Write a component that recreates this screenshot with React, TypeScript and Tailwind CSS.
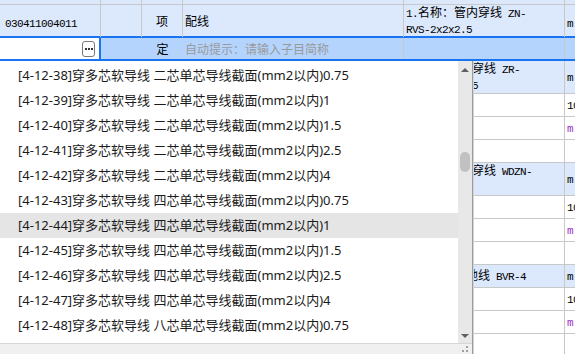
import React from "react";

const G = "grid grid-cols-[101px_41px_41px_221px_161px_1fr]";
const LN = "border-r border-[#c8c8c8]";

function Mixed({ text }: { text: string }) {
  const parts = text.split(/([\u3000-\u303f\u4e00-\u9fff\uff00-\uffef]+)/);
  return (
    <span className="whitespace-pre">
      {parts.map((p, i) =>
        /[\u3000-\u303f\u4e00-\u9fff\uff00-\uffef]/.test(p) ? (
          <span key={i} className="font-['Noto_Sans_CJK_SC',sans-serif] text-[12px]">
            {p}
          </span>
        ) : (
          <span key={i} className="font-['Liberation_Mono',monospace] text-[11px] tracking-[-0.6px]">
            {p}
          </span>
        )
      )}
    </span>
  );
}

type Row =
  | { kind: "blue"; lines: string[]; h: "h-[33px]" | "h-[23px]" }
  | { kind: "white"; v?: string; purple?: boolean };

const rows: Row[] = [
  { kind: "blue", lines: ["1.名称:管内穿线 ZR-", "RVS-2x2x0.75"], h: "h-[33px]" },
  { kind: "white", v: "10" },
  { kind: "white", v: "m", purple: true },
  { kind: "white" },
  { kind: "blue", lines: ["1.名称:管内穿线 WDZN-", "BYJ-3x2.5"], h: "h-[33px]" },
  { kind: "white", v: "10" },
  { kind: "white", v: "m", purple: true },
  { kind: "white" },
  { kind: "blue", lines: ["1.名称：接地线 BVR-4"], h: "h-[23px]" },
  { kind: "white", v: "10" },
  { kind: "white", v: "m", purple: true },
  { kind: "white" },
];

const items: [string, string, string][] = [
  ["38", "二", "0.75"],
  ["39", "二", "1"],
  ["40", "二", "1.5"],
  ["41", "二", "2.5"],
  ["42", "二", "4"],
  ["43", "四", "0.75"],
  ["44", "四", "1"],
  ["45", "四", "1.5"],
  ["46", "四", "2.5"],
  ["47", "四", "4"],
  ["48", "八", "0.75"],
];

function BodyRow({ r }: { r: Row }) {
  if (r.kind === "blue") {
    return (
      <div className={`${G} ${r.h} bg-[#dce8fb] border-b border-[#c8c8c8]`}>
        <div className={LN} />
        <div className={LN} />
        <div className={LN} />
        <div className={LN} />
        <div className={`${LN} flex flex-col justify-center pl-[2px] leading-[13px] text-black`}>
          {r.lines.map((l, i) => (
            <div key={i}>
              <Mixed text={l} />
            </div>
          ))}
        </div>
        <div className="flex items-center pl-[2px] leading-[13px] text-black">
          <Mixed text="m" />
        </div>
      </div>
    );
  }
  return (
    <div className={`${G} h-[23px] bg-white border-b border-[#c8c8c8]`}>
      <div className={LN} />
      <div className={LN} />
      <div className={LN} />
      <div className={LN} />
      <div className={LN} />
      <div
        className={`flex items-center pl-[2px] leading-[13px] overflow-hidden ${
          r.purple ? "text-[#9a2fc4]" : "text-black"
        }`}
      >
        {r.v ? <Mixed text={r.v} /> : null}
      </div>
    </div>
  );
}

export default function App() {
  return (
    <div className="relative w-[575px] h-[354px] overflow-hidden bg-white">
      {/* top partial row */}
      <div className={`${G} h-[5px] bg-[#dce8fb] border-b border-[#c8c8c8]`}>
        <div className={LN} />
        <div className={LN} />
        <div className={LN} />
        <div className={LN} />
        <div className={LN} />
        <div />
      </div>

      {/* row 1 */}
      <div className={`${G} h-[31px] bg-[#dce8fb]`}>
        <div className={`${LN} flex items-center pl-[5px] text-black`}>
          <Mixed text="030411004011" />
        </div>
        <div className={LN} />
        <div className={`${LN} flex items-center justify-center font-['Noto_Sans_CJK_SC',sans-serif] text-[12px] text-black`}>
          项
        </div>
        <div className={`${LN} flex items-center pl-[2px] font-['Noto_Sans_CJK_SC',sans-serif] text-[12px] text-black`}>
          配线
        </div>
        <div className={`${LN} flex flex-col justify-center pl-[2px] leading-[13px] text-black`}>
          <div>
            <Mixed text="1.名称：管内穿线 ZN-" />
          </div>
          <div>
            <Mixed text="RVS-2x2x2.5" />
          </div>
        </div>
        <div className="flex items-center pl-[2px] text-black">
          <Mixed text="m" />
        </div>
      </div>

      {/* row 2 (editing) */}
      <div className={`${G} h-[25px] border-y-2 border-[#1874f0] bg-[#b4d4fd]`}>
        <div className="flex items-center justify-end pr-[4px] bg-white border-r-2 border-[#1874f0]">
          <div className="flex items-center justify-center gap-[1px] w-[13px] h-[16px] rounded-[3px] border border-[#7a7a7a] bg-white">
            <div className="w-[2px] h-[2px] bg-[#333]" />
            <div className="w-[2px] h-[2px] bg-[#333]" />
            <div className="w-[2px] h-[2px] bg-[#333]" />
          </div>
        </div>
        <div className={`col-span-3 ${LN} flex items-center font-['Noto_Sans_CJK_SC',sans-serif] text-[12px]`}>
          <div className="w-[41px] shrink-0" />
          <div className="w-[41px] shrink-0 text-center text-black">定</div>
          <div className="pl-[2px] text-[#9a9a9a] whitespace-nowrap">自动提示：请输入子目简称</div>
        </div>
        <div className={LN} />
        <div />
      </div>

      {/* body rows */}
      {rows.map((r, i) => (
        <BodyRow key={i} r={r} />
      ))}

      {/* dropdown */}
      <div className="absolute left-0 top-[61px] w-[473px] h-[294px] flex flex-col bg-white border-r border-[#9c9c9c] shadow-[1px_0_0_#d4d4d4]">
        <div className="flex h-[282px]">
          <div className="w-[458px] h-[282px] overflow-hidden pt-[2px] font-['Noto_Sans','Noto_Sans_CJK_SC',sans-serif] text-[13px] text-[#1b1b1b]">
            {items.map(([n, c, v]) => (
              <div
                key={n}
                className={`h-[25px] flex items-center pl-[18px] whitespace-nowrap ${
                  n === "44" ? "bg-[#e5e5e5]" : ""
                }`}
              >
                [4-12-{n}]穿多芯软导线 {c}芯单芯导线截面(mm2以内){v}
              </div>
            ))}
          </div>
          <div className="w-[14px] h-[282px] bg-[#e8e8e8] flex flex-col items-center pt-[7px] pb-[5px]">
            <svg width="8" height="4" viewBox="0 0 8 4">
              <polygon points="0,4 4,0 8,4" fill="#606060" />
            </svg>
            <div className="mt-[80px] w-[10px] h-[20px] rounded-full bg-[#c1c1c1]" />
            <div className="flex-1" />
            <svg width="8" height="4" viewBox="0 0 8 4">
              <polygon points="0,0 8,0 4,4" fill="#606060" />
            </svg>
          </div>
        </div>
        <div className="flex-1 flex justify-end border-t border-[#d6d6d6] bg-[#f0f0f0]">
          <svg width="14" height="10" viewBox="0 0 14 10">
            <rect x="8" y="2" width="2" height="2" fill="#a0a0a0" />
            <rect x="4" y="6" width="2" height="2" fill="#a0a0a0" />
            <rect x="8" y="6" width="2" height="2" fill="#a0a0a0" />
          </svg>
        </div>
      </div>
    </div>
  );
}
